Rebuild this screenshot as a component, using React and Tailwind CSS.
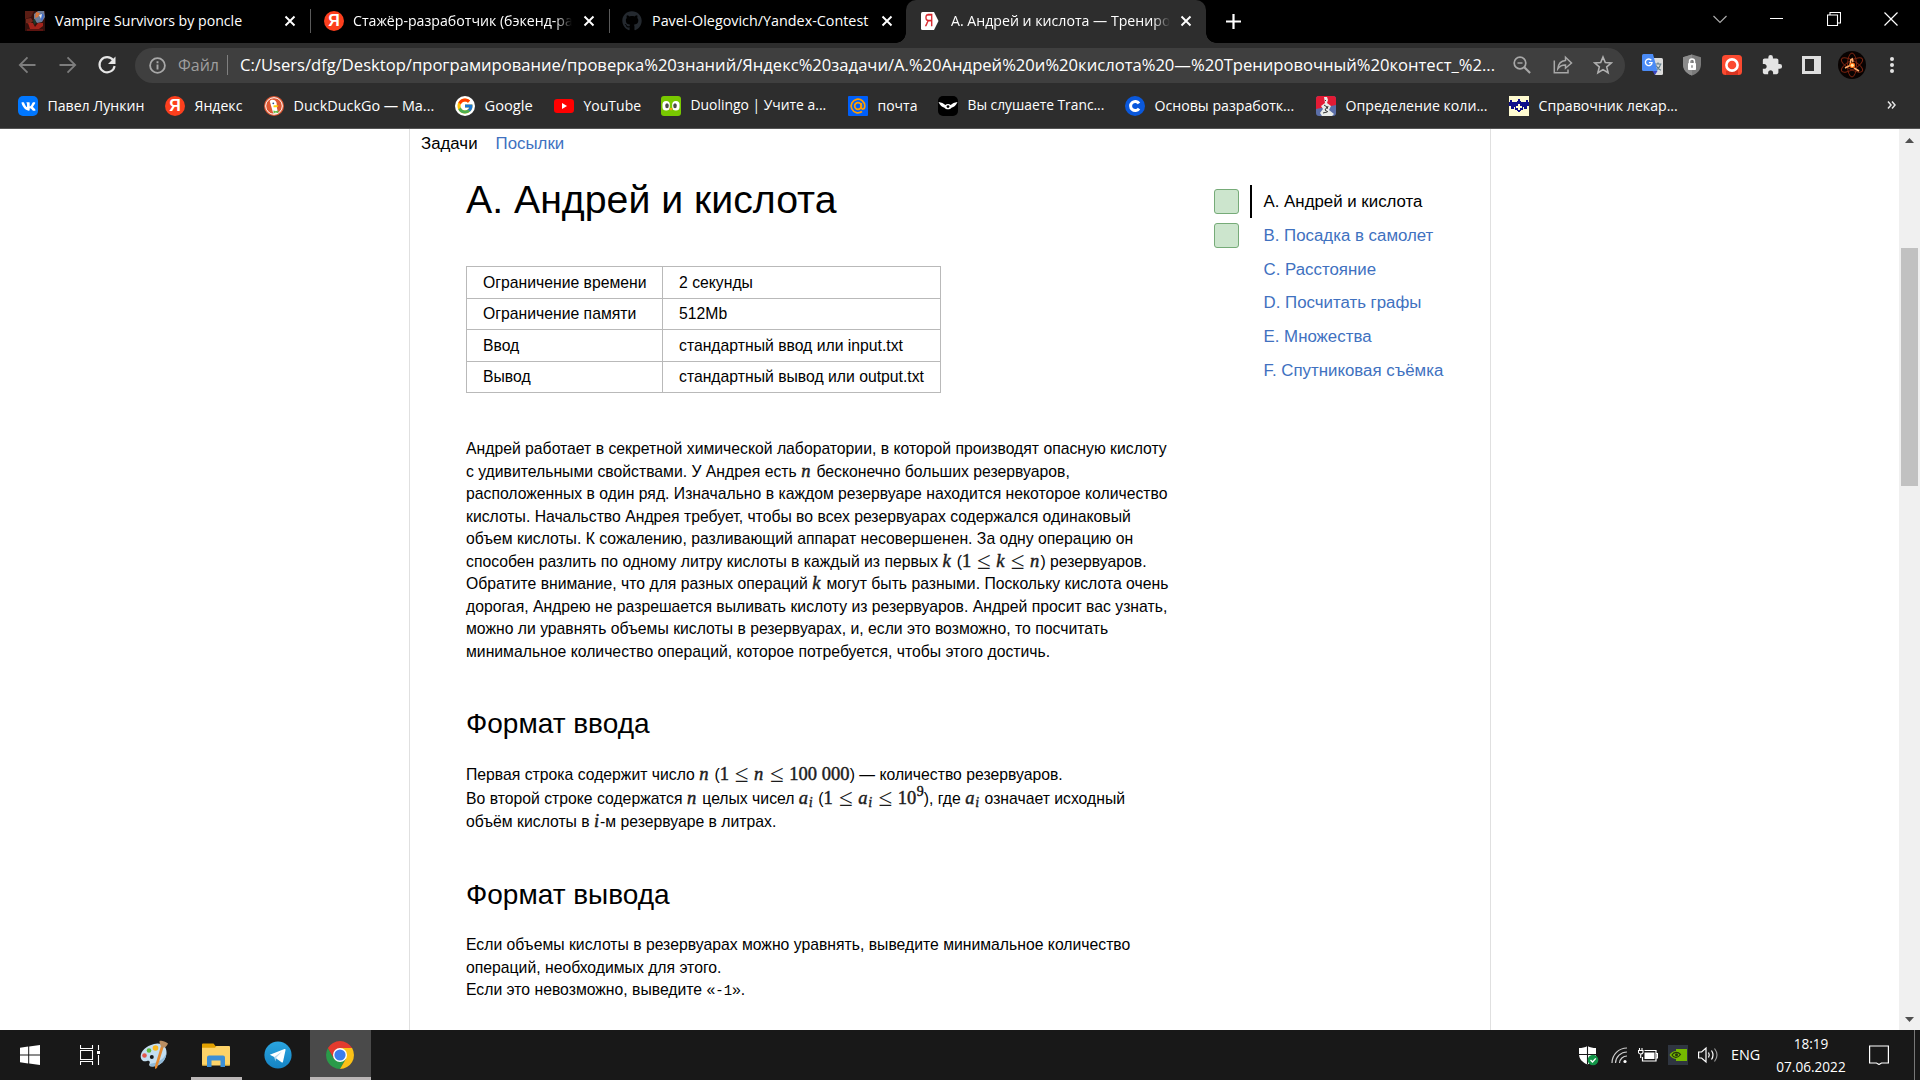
import React from "react";
import { FaGithub, FaVk } from "react-icons/fa";
import { FcGoogle } from "react-icons/fc";
import { MdExtension } from "react-icons/md";

/* ---------- favicons ---------- */

const VampireIcon = () => (
  <svg width="20" height="20" viewBox="0 0 20 20">
    <rect width="20" height="20" fill="#35100c" />
    <path d="M0 0h9l-3 6-6 2z" fill="#5a1d14" />
    <path d="M9 3l4-3h6l1 6-3 5-5 1-3-4z" fill="#6d7d99" />
    <path d="M11 1l4 1-2 4-3 1z" fill="#d9763a" />
    <path d="M16 2l3 2-2 6-2-3z" fill="#3b6ad0" />
    <path d="M14 4l3-1-1 5z" fill="#e8e4dc" />
    <path d="M1 8l5-1 2 3-3 3-4-1z" fill="#77281c" />
    <path d="M3 12h5l2 4 3-4h5v3l-4 3H5z" fill="#a3231a" />
    <path d="M2 18h16v2H2z" fill="#5e1410" />
    <path d="M8 9l2-1 1 4-2 2z" fill="#1d3a2a" />
  </svg>
);

const YandexIcon = () => (
  <span className="flex h-5 w-5 items-center justify-center rounded-full bg-[#fc3f1d] font-['Liberation_Sans',sans-serif] text-[16px] leading-none font-bold text-white">
    Я
  </span>
);

const ContestIcon = () => (
  <span className="relative flex h-5 w-5 items-center">
    <svg className="absolute inset-0" width="20" height="20" viewBox="0 0 20 20">
      <path d="M2.500 1H14l4.500 9L14 19H2.500Q1 19 1 17.500v-15Q1 1 2.500 1z" fill="#fff" />
    </svg>
    <span className="relative ml-[3px] inline-block scale-x-75 font-['Liberation_Sans',sans-serif] text-[16px] leading-none text-[#d8262c] [-webkit-text-stroke:0.3px_#d8262c]">
      Я
    </span>
  </span>
);

const VkIcon = () => (
  <span className="flex h-5 w-5 items-center justify-center rounded-[5px] bg-[#0077ff]">
    <FaVk size={15} color="#fff" />
  </span>
);

const DuckIcon = () => (
  <svg width="20" height="20" viewBox="0 0 20 20">
    <circle cx="10" cy="10" r="10" fill="#de5833" />
    <circle cx="10" cy="10" r="8.300" fill="none" stroke="#fff" strokeWidth="1" />
    <path d="M5.800 5.200c1.200-2.200 5.500-2 6.600 1 .6 2 .2 4 .6 6l1.200 5a8 8 0 0 1-4.800.5C8.300 14 6.800 9 5.800 5.200z" fill="#fff" />
    <circle cx="9.300" cy="7.300" r=".9" fill="#2d4f8e" />
    <path d="M9.500 9.600c2-.7 4.500-.5 5 .1-.6 1.200-3 1.800-5 1.500z" fill="#fdd20a" />
    <path d="M9.500 14.500l2.300.8 2.500-1v3l-2.500-.8-2.300.8z" fill="#65bc46" />
  </svg>
);

const GoogleIcon = () => (
  <span className="flex h-5 w-5 items-center justify-center rounded-full bg-white">
    <FcGoogle size={18} />
  </span>
);

const YouTubeIcon = () => (
  <svg width="20" height="20" viewBox="0 0 20 20">
    <rect y="3" width="20" height="14" rx="3.200" fill="#f00" />
    <path d="M8 7l5 3-5 3z" fill="#fff" />
  </svg>
);

const DuolingoIcon = () => (
  <svg width="20" height="20" viewBox="0 0 20 20">
    <rect width="20" height="20" rx="3" fill="#78c800" />
    <rect x="1.500" y="5" width="7.300" height="9.500" rx="3.500" fill="#fff" />
    <rect x="11.200" y="5" width="7.300" height="9.500" rx="3.500" fill="#fff" />
    <ellipse cx="6" cy="9.800" rx="1.800" ry="2.500" fill="#4b4b4b" />
    <ellipse cx="14" cy="9.800" rx="1.800" ry="2.500" fill="#4b4b4b" />
    <path d="M8 12h4l-2 2.800z" fill="#f7a418" />
  </svg>
);

const MailIcon = () => (
  <svg width="20" height="20" viewBox="0 0 20 20">
    <rect width="20" height="20" rx="1" fill="#005ff9" />
    <circle cx="10" cy="10" r="3.300" fill="none" stroke="#ff9e00" strokeWidth="1.800" />
    <path d="M13.300 7v4.200c0 2.800 3.500 2.500 3.500-1.200A6.800 6.800 0 1 0 14 15.500" fill="none" stroke="#ff9e00" strokeWidth="1.700" />
  </svg>
);

const TranceIcon = () => (
  <svg width="20" height="20" viewBox="0 0 20 20">
    <rect width="20" height="20" rx="5" fill="#000" />
    <path d="M.5 6c3 .5 5.200 1.400 6.800 3 1.500-1.300 3.900-1.300 5.400 0 1.600-1.600 3.800-2.500 6.800-3-1.500 3.500-3.500 5-6 5.700-1.600 2.200-5.400 2.200-7 0C4 11 2 9.500.5 6z" fill="#fff" />
    <circle cx="10" cy="10.600" r="1.400" fill="#000" />
  </svg>
);

const CodeIcon = () => (
  <svg width="20" height="20" viewBox="0 0 20 20">
    <circle cx="10" cy="10" r="10" fill="#0a58dc" />
    <path d="M14 7.400a4.600 4.600 0 1 0 0 5.200" fill="none" stroke="#fff" strokeWidth="3" />
  </svg>
);

const StatueIcon = () => (
  <svg width="20" height="20" viewBox="0 0 20 20">
    <rect width="20" height="20" rx="3" fill="#5b6ea8" />
    <path d="M3 0h14a3 3 0 0 1 3 3v6L0 13V3a3 3 0 0 1 3-3z" fill="#e31b35" />
    <path d="M8 1h3l1 3-1 3 4 3-2 4 5 4-2 2H6l-2-3 3-4-2-3 4-3z" fill="#e9ebe8" />
    <path d="M9 4l1 1M8 9l3 2-2 3 3 2M12 10l-1 3M7 17l4-1" stroke="#333" strokeWidth="1" fill="none" />
  </svg>
);

const HandbookIcon = () => (
  <svg width="20" height="20" viewBox="0 0 20 20">
    <rect width="20" height="20" fill="#fffbd0" />
    <path d="M0 6h1V4h2v2h5V5h1V3h2v2h1v1h5V4h2v2h1v4h-2v3h-3v-2h-1v3h-2v1h-1v1H9v-1H8v-1H6v-3H5v2H2v-3H0z" fill="#10108a" />
    <path d="M9 8h2v2h2v2h-2v2H9v-2H7v-2h2z" fill="#fffbd0" />
  </svg>
);

/* ---------- browser chrome ---------- */

const CloseX = () => (
  <svg width="12" height="12" viewBox="0 0 12 12" className="shrink-0">
    <path d="M1.500 1.500l9 9M10.500 1.500l-9 9" stroke="#fff" strokeWidth="1.900" />
  </svg>
);

const TabStrip = () => (
  <div className="flex h-[43px] bg-black text-[14.15px] text-white">
    <div className="flex w-[310px] items-center pr-[14px] pb-px pl-[25px]">
      <VampireIcon />
      <span className="ml-[10px] flex-1 pb-px whitespace-nowrap">Vampire Survivors by poncle</span>
      <CloseX />
    </div>
    <div className="flex w-[299px] items-center pr-[14px] pb-px">
      <span className="h-6 w-px bg-[#5a5a5a]" />
      <span className="ml-[13px]"><YandexIcon /></span>
      <span className="mr-auto ml-[9px] w-[219px] pb-px whitespace-nowrap [mask-image:linear-gradient(to_right,black_92%,transparent_100%)]">
        Стажёр-разработчик (бэкенд-ра
      </span>
      <CloseX />
    </div>
    <div className="flex w-[297px] items-center pr-[13px] pb-px">
      <span className="h-6 w-px bg-[#5a5a5a]" />
      <span className="ml-[12px]"><FaGithub size={20} color="#24292f" /></span>
      <span className="ml-[10px] flex-1 pb-px text-[14.35px] whitespace-nowrap">Pavel-Olegovich/Yandex-Contest</span>
      <CloseX />
    </div>
    <div className="relative flex w-[300px] items-center rounded-t-[10px] bg-[#2d2d2d] pr-[14px] pb-px pl-[14px]">
      <span className="absolute bottom-0 -left-[10px] h-[10px] w-[10px] bg-[radial-gradient(circle_at_0_0,transparent_9.5px,#2d2d2d_10px)]" />
      <span className="absolute -right-[10px] bottom-0 h-[10px] w-[10px] bg-[radial-gradient(circle_at_100%_0,transparent_9.5px,#2d2d2d_10px)]" />
      <ContestIcon />
      <span className="mr-auto ml-[11px] w-[219px] pb-px whitespace-nowrap [mask-image:linear-gradient(to_right,black_92%,transparent_100%)]">
        А. Андрей и кислота — Трениро
      </span>
      <CloseX />
    </div>
    <div className="flex flex-1 items-center pb-px pl-[20px]">
      <svg width="15" height="15" viewBox="0 0 15 15">
        <path d="M7.500 0v15M0 7.500h15" stroke="#fff" strokeWidth="2.200" />
      </svg>
    </div>
    <div className="flex h-[37px] items-center text-white">
      <svg width="14" height="14" viewBox="0 0 14 14" className="mr-[43px]">
        <path d="M.5 4l6.500 6.500L13.500 4" fill="none" stroke="#aaa" strokeWidth="1.200" />
      </svg>
      <svg width="14" height="14" viewBox="0 0 14 14" className="mr-[43px]">
        <path d="M0 6.500h13" stroke="#fff" strokeWidth="1" shapeRendering="crispEdges" />
      </svg>
      <svg width="14" height="14" viewBox="0 0 14 14" className="mr-[43px]">
        <path d="M.5 3h10v10.500H.5zM3 3V.5h10.500V11H11" fill="none" stroke="#fff" strokeWidth="1.100" />
      </svg>
      <svg width="14" height="14" viewBox="0 0 14 14" className="mr-[22px]">
        <path d="M.5.5l13 13M13.500.5l-13 13" stroke="#fff" strokeWidth="1.200" />
      </svg>
    </div>
  </div>
);

const Toolbar = () => (
  <div className="flex h-[44px] items-center bg-[#2d2d2d]">
    <svg width="18" height="18" viewBox="0 0 18 18" className="ml-[18px]">
      <path d="M17.500 9H2M9.500 1.300L1.800 9l7.700 7.700" fill="none" stroke="#7d7d7d" strokeWidth="1.800" />
    </svg>
    <svg width="18" height="18" viewBox="0 0 18 18" className="ml-[23px]">
      <path d="M.5 9H16M8.500 1.300L16.200 9l-7.700 7.700" fill="none" stroke="#7d7d7d" strokeWidth="1.800" />
    </svg>
    <svg width="20" height="20" viewBox="0 0 20 20" className="ml-[20px]">
      <path d="M16.200 5.200A7.600 7.600 0 1 0 17.600 11" fill="none" stroke="#e6e6e6" strokeWidth="2.100" />
      <path d="M18.500 1.500V9H11z" fill="#e6e6e6" />
    </svg>
    <div className="ml-[18px] flex h-[35px] w-[1490px] items-center rounded-full bg-[#3f3f3f]">
      <svg width="17" height="17" viewBox="0 0 17 17" className="ml-[14px] shrink-0">
        <circle cx="8.500" cy="8.500" r="7.400" fill="none" stroke="#a8a8a8" strokeWidth="1.800" />
        <path d="M8.500 7.500v5M8.500 4.300v1.900" stroke="#a8a8a8" strokeWidth="1.900" />
      </svg>
      <span className="ml-[12px] w-[49px] text-[16px] text-[#9e9e9e]">Файл</span>
      <span className="h-5 w-px bg-[#808080]" />
      <span className="ml-[12px] w-[1273px] text-[16.6px] whitespace-nowrap text-white">
        C:/Users/dfg/Desktop/програмирование/проверка%20знаний/Яндекс%20задачи/А.%20Андрей%20и%20кислота%20—%20Тренировочный%20контест_%2...
      </span>
      <svg width="18" height="18" viewBox="0 0 18 18" className="shrink-0">
        <circle cx="7" cy="7" r="5.800" fill="none" stroke="#a8a8a8" strokeWidth="1.700" />
        <path d="M11.300 11.300l5.800 5.800" stroke="#a8a8a8" strokeWidth="2.100" />
        <path d="M4.500 7h5" stroke="#a8a8a8" strokeWidth="1.400" />
      </svg>
      <svg width="20" height="20" viewBox="0 0 20 20" className="ml-[22px] shrink-0">
        <path d="M1.300 5.500v12.200H15V14.500" fill="none" stroke="#a8a8a8" strokeWidth="1.500" />
        <path d="M12.500 2.300L18.500 8l-6 5.200V10c-3.500-.1-5.800 1.100-7.700 3.800C5.200 9.300 7.800 5.800 12.500 5.400z" fill="none" stroke="#a8a8a8" strokeWidth="1.500" />
      </svg>
      <svg width="20" height="20" viewBox="0 0 20 20" className="ml-[20px] shrink-0">
        <path d="M10 2l2.300 5.500 5.900.5-4.500 3.900 1.400 5.800L10 14.600l-5.100 3.100 1.400-5.800L1.800 8l5.900-.5z" fill="none" stroke="#b0b0b0" strokeWidth="1.600" />
      </svg>
    </div>
    <svg width="22" height="22" viewBox="0 0 22 22" className="ml-[17px]">
      <path d="M9 4h10.500Q21 4 21 5.500v14Q21 21 19.500 21H13z" fill="#dcdcdc" />
      <path d="M12.500 10h7M16 8.500V10M18.500 10c-.5 3-2.500 5-5 6.200M14 11.500c1 2 2.500 3.800 5 4.700" fill="none" stroke="#607d8b" strokeWidth="1.200" />
      <path d="M1.500 0H11l4.500 17H1.500Q0 17 0 15.500v-14Q0 0 1.500 0z" fill="#4b8bf5" />
      <path d="M10.500 17h5L13 21z" fill="#3a46c4" />
      <path d="M9.300 6.300A3.300 3.300 0 1 0 10 8.600H6.900" fill="none" stroke="#fff" strokeWidth="1.400" />
    </svg>
    <svg width="20" height="22" viewBox="0 0 20 22" className="ml-[18px]">
      <path d="M10 .5l9 2.700v7c0 5.300-3.500 9.300-9 11.300-5.500-2-9-6-9-11.300v-7z" fill="#7b7b7b" />
      <path d="M10 .5v21c-5.500-2-9-6-9-11.300v-7z" fill="#8c8c8c" />
      <rect x="6" y="9" width="8" height="7" rx=".8" fill="#fff" />
      <path d="M7.500 9V7.500a2.500 2.500 0 0 1 5 0V9" fill="none" stroke="#fff" strokeWidth="1.500" />
      <path d="M10 11.300v2.500" stroke="#777" strokeWidth="1.300" />
    </svg>
    <svg width="20" height="20" viewBox="0 0 20 20" className="ml-[20px]">
      <rect width="20" height="20" rx="3.500" fill="#fb4a30" />
      <path d="M4 20v-4l12-1v5z" fill="#d93420" />
      <circle cx="10" cy="10" r="5.600" fill="none" stroke="#fff" strokeWidth="2.600" />
    </svg>
    <MdExtension size={22} color="#e3e3e3" className="ml-[19px]" />
    <svg width="19" height="18" viewBox="0 0 19 18" className="ml-[19px]">
      <path d="M0 0h19v18H0zM3 3v12h9V3z" fill="#dedede" fillRule="evenodd" />
    </svg>
    <svg width="28" height="28" viewBox="0 0 28 28" className="ml-[17px]">
      <circle cx="14" cy="14" r="14" fill="#080302" />
      <g fill="none" stroke="#7a2410" strokeWidth="1">
        <ellipse cx="14" cy="14" rx="4.500" ry="12" />
        <ellipse cx="14" cy="14" rx="4.500" ry="12" transform="rotate(60 14 14)" />
        <ellipse cx="14" cy="14" rx="4.500" ry="12" transform="rotate(120 14 14)" />
      </g>
      <path d="M7 17l5-2.500L13 8M16 17l5 3M14 7l1 4" fill="none" stroke="#ffb070" strokeWidth="1.500" />
      <circle cx="14.300" cy="14.300" r="2.800" fill="#ff6a10" />
      <circle cx="14.300" cy="14.300" r="1.600" fill="#ffe9a0" />
    </svg>
    <svg width="4" height="18" viewBox="0 0 4 18" className="ml-[24px]">
      <circle cx="2" cy="3" r="2" fill="#e3e3e3" />
      <circle cx="2" cy="9" r="2" fill="#e3e3e3" />
      <circle cx="2" cy="15" r="2" fill="#e3e3e3" />
    </svg>
  </div>
);

const bookmarks = [
  { Icon: VkIcon, label: "Павел Лункин", box: "w-[147px]", text: "text-[14.1px]" },
  { Icon: YandexIcon, label: "Яндекс", box: "w-[99px]", text: "text-[14.1px]" },
  { Icon: DuckIcon, label: "DuckDuckGo — Ma...", box: "w-[191px]", text: "text-[14.4px]" },
  { Icon: GoogleIcon, label: "Google", box: "w-[99px]", text: "text-[14.7px]" },
  { Icon: YouTubeIcon, label: "YouTube", box: "w-[107px]", text: "text-[14px]" },
  { Icon: DuolingoIcon, label: "Duolingo | Учите а...", box: "w-[187px]", text: "text-[13.9px]" },
  { Icon: MailIcon, label: "почта", box: "w-[90px]", text: "text-[14px]" },
  { Icon: TranceIcon, label: "Вы слушаете Tranc...", box: "w-[187px]", text: "text-[13.8px]" },
  { Icon: CodeIcon, label: "Основы разработк...", box: "w-[191px]", text: "text-[14.15px]" },
  { Icon: StatueIcon, label: "Определение коли...", box: "w-[193px]", text: "text-[14.15px]" },
  { Icon: HandbookIcon, label: "Справочник лекар...", box: "w-[180px]", text: "text-[14.15px]" },
];

const BookmarksBar = () => (
  <div className="flex h-[42px] items-start border-b border-[#555] bg-[#2d2d2d] pt-[9px] pr-[24px] pl-[18px] text-white">
    {bookmarks.map(({ Icon, label, box, text }) => (
      <div key={label} className={`flex h-5 shrink-0 items-center ${box}`}>
        <Icon />
        <span className={`ml-[9.5px] pb-px whitespace-nowrap ${text}`}>{label}</span>
      </div>
    ))}
    <svg width="9" height="8" viewBox="0 0 9 8" className="mt-[5px] ml-auto">
      <path d="M1 .5L4 4 1 7.500M5 .5L8 4 5 7.500" fill="none" stroke="#e6e6e6" strokeWidth="1.500" />
    </svg>
  </div>
);

/* ---------- page ---------- */

const M = ({ w = "", it, children }) => (
  <span
    className={`inline-block font-['Liberation_Serif',serif] text-[18.5px] leading-[16px] text-[#1c1c1c] [-webkit-text-stroke:0.45px_#1c1c1c] ${it ? "italic" : ""} ${w}`}
  >
    {children}
  </span>
);

const Le = () => (
  <span className="relative top-[2px] inline-block w-[24.7px] text-center font-['Liberation_Serif',serif] text-[25px] leading-[10px] text-[#1c1c1c]">
    ≤
  </span>
);

const Ai = () => (
  <span className="inline-block w-[15px] whitespace-nowrap">
    <M it w="w-[10px]">a</M>
    <span className="relative top-[3px] inline-block font-['Liberation_Serif',serif] text-[14px] leading-[8px] text-[#1c1c1c] italic [-webkit-text-stroke:0.4px_#1c1c1c]">
      i
    </span>
  </span>
);

const Line = ({ children, h = "h-[22.5px]" }) => (
  <div className={`leading-[22.5px] whitespace-nowrap ${h}`}>{children}</div>
);

const limits = [
  ["Ограничение времени", "2 секунды", "h-[32px]"],
  ["Ограничение памяти", "512Mb", "h-[31px]"],
  ["Ввод", "стандартный ввод или input.txt", "h-[32px]"],
  ["Вывод", "стандартный вывод или output.txt", "h-[31px]"],
];

const Problem = () => (
  <div className="w-[748px] text-[15.75px] text-black">
    <h1 className="mt-[24px] h-[48px] text-[39.25px] leading-[48px] whitespace-nowrap">А. Андрей и кислота</h1>
    <div className="mt-[43px] w-[475px] border-t border-l border-[#b9b9b9]">
      {limits.map(([name, value, h]) => (
        <div key={name} className={`flex border-b border-[#b9b9b9] whitespace-nowrap ${h}`}>
          <div className="flex w-[196px] items-center border-r border-[#b9b9b9] pl-[16px]">{name}</div>
          <div className="flex flex-1 items-center border-r border-[#b9b9b9] pl-[16px]">{value}</div>
        </div>
      ))}
    </div>
    <div className="mt-[45px]">
      <Line>Андрей работает в секретной химической лаборатории, в которой производят опасную кислоту</Line>
      <Line>с удивительными свойствами. У Андрея есть <M it w="w-[11px]">n</M> бесконечно больших резервуаров,</Line>
      <Line>расположенных в один ряд. Изначально в каждом резервуаре находится некоторое количество</Line>
      <Line>кислоты. Начальство Андрея требует, чтобы во всех резервуарах содержался одинаковый</Line>
      <Line>объем кислоты. К сожалению, разливающий аппарат несовершенен. За одну операцию он</Line>
      <Line>
        способен разлить по одному литру кислоты в каждый из первых <M it w="w-[10px]">k</M> (<M w="w-[9.500px]">1</M><Le /><M it w="w-[9px]">k</M><Le /><M it w="w-[10.500px]">n</M>) резервуаров.
      </Line>
      <Line>Обратите внимание, что для разных операций <M it w="w-[10px]">k</M> могут быть разными. Поскольку кислота очень</Line>
      <Line>дорогая, Андрею не разрешается выливать кислоту из резервуаров. Андрей просит вас узнать,</Line>
      <Line>можно ли уравнять объемы кислоты в резервуарах, и, если это возможно, то посчитать</Line>
      <Line>минимальное количество операций, которое потребуется, чтобы этого достичь.</Line>
    </div>
    <h2 className="mt-[43px] h-[36px] text-[28px] leading-[36px]">Формат ввода</h2>
    <div className="mt-[22px]">
      <Line h="h-[24px]">
        Первая строка содержит число <M it w="w-[11px]">n</M> (<M w="w-[9.500px]">1</M><Le /><M it w="w-[10.500px]">n</M><Le /><M w="w-[28.500px]">100</M><M w="w-[4px]"> </M><M w="w-[28px]">000</M>) — количество резервуаров.
      </Line>
      <Line>
        Во второй строке содержатся <M it w="w-[11px]">n</M> целых чисел <Ai /> (<M w="w-[10px]">1</M><Le /><Ai /><Le /><M w="w-[19px]">10</M>
        <span className="relative -top-[8px] inline-block w-[7px] font-['Liberation_Serif',serif] text-[14px] leading-[6px] [-webkit-text-stroke:0.4px_#1c1c1c]">9</span>), где <Ai /> означает исходный
      </Line>
      <Line>объём кислоты в <M it w="w-[6px]">i</M>-м резервуаре в литрах.</Line>
    </div>
    <h2 className="mt-[44px] h-[36px] text-[28px] leading-[36px]">Формат вывода</h2>
    <div className="mt-[21px]">
      <Line>Если объемы кислоты в резервуарах можно уравнять, выведите минимальное количество</Line>
      <Line>операций, необходимых для этого.</Line>
      <Line>Если это невозможно, выведите «<span className="font-['Liberation_Mono',monospace] text-[14px] leading-none">-1</span>».</Line>
    </div>
  </div>
);

const tasks = [
  { label: "A. Андрей и кислота", done: true, active: true },
  { label: "B. Посадка в самолет", done: true },
  { label: "C. Расстояние" },
  { label: "D. Посчитать графы" },
  { label: "E. Множества" },
  { label: "F. Спутниковая съёмка" },
];

const TaskList = () => (
  <div className="mt-[34px] text-[16.85px]">
    {tasks.map(({ label, done, active }) => (
      <div key={label} className="flex h-[33.75px] items-center whitespace-nowrap">
        <span className={`h-[25px] w-[25px] rounded-[3px] border ${done ? "border-[#76ab78] bg-[#cce5cd]" : "border-transparent"}`} />
        <span className={`ml-[11px] h-[33px] w-[2px] ${active ? "bg-black" : ""}`} />
        <span className={`ml-[11.5px] ${active ? "text-black" : "text-[#4071bf]"}`}>{label}</span>
      </div>
    ))}
  </div>
);

const Page = () => (
  <div className="flex h-[901px] overflow-hidden bg-white font-['Liberation_Sans',Arial,sans-serif]">
    <div className="ml-[409px] w-[1082px] border-r border-l border-[#e0e0e0]">
      <div className="flex h-[22px] items-start gap-[18px] pt-[4px] pl-[11px] text-[16.85px] leading-[22px]">
        <span className="text-black">Задачи</span>
        <span className="text-[#4071bf]">Посылки</span>
      </div>
      <div className="flex pl-[56px]">
        <Problem />
        <TaskList />
      </div>
    </div>
    <div className="ml-auto flex w-[21px] flex-col items-center bg-[#f0f0f0]">
      <svg width="9" height="5" viewBox="0 0 9 5" className="mt-[9px]">
        <path d="M0 5L4.500 0 9 5z" fill="#505050" />
      </svg>
      <div className="mt-[105px] h-[238px] w-[17px] bg-[#c1c1c1]" />
      <svg width="9" height="5" viewBox="0 0 9 5" className="mt-auto mb-[8px]">
        <path d="M0 0h9L4.500 5z" fill="#505050" />
      </svg>
    </div>
  </div>
);

/* ---------- taskbar ---------- */

const WindowsIcon = () => (
  <svg width="20" height="20" viewBox="0 0 20 20">
    <path d="M0 2.800l8.200-1.200v7.900H0zM9.200 1.500L20 0v9.500H9.200zM0 10.500h8.200v7.900L0 17.200zM9.200 10.500H20V20L9.200 18.500z" fill="#fff" />
  </svg>
);

const TaskViewIcon = () => (
  <svg width="20" height="20" viewBox="0 0 20 20" fill="none" stroke="#fff" strokeWidth="1.100">
    <path d="M.5 0v3.500h12V0M.5 5.500h12v9H.5zM.5 20v-3.500h12V20M18.500 0v5M18.500 10v10" />
    <path d="M17 6h3v3h-3z" fill="#fff" stroke="none" />
  </svg>
);

const PaintIcon = () => (
  <svg width="30" height="30" viewBox="0 0 30 30">
    <path d="M15 4c7-2 13 2 12.500 9C27 20 22 26 14 26.500c-3 .2-4.500-1-3.500-3 1-2-.5-3-2.500-2.500-2 .6-4 .6-5.500-1.500C-.5 14 5 6.500 15 4z" fill="#c3def0" />
    <path d="M14 26.500C22 26 27 20 27.500 13c-2 5-7 9.500-15 10.500-2 .5-2.500 2.500 1.500 3z" fill="#8fb9d8" />
    <circle cx="5.500" cy="15.500" r="2.300" fill="#e2574c" />
    <circle cx="10" cy="10.500" r="2.300" fill="#5fb83c" />
    <circle cx="16.500" cy="8" r="2.800" fill="#f9b81f" />
    <circle cx="12.800" cy="17" r="2" fill="#181818" />
    <path d="M22 6l2.500 1.500L18 28l-2 1v-3z" fill="#e58a2f" />
    <path d="M20.500 1c2-.8 5 0 8.500 2.500-1 3-3.500 4.500-6 4.200-1.500-2-2.500-4-2.500-6.700z" fill="#b98e62" />
  </svg>
);

const FolderIcon = () => (
  <svg width="28" height="24" viewBox="0 0 28 24">
    <path d="M0 1.500Q0 .5 1 .5h10.500L13.500 3H27v4H0z" fill="#e2a100" />
    <path d="M0 4.800h13L14.500 3H27q1 0 1 1v17.500q0 1-1 1H1q-1 0-1-1z" fill="#fdd368" />
    <path d="M5 24V14.500q0-2 2-2h14q2 0 2 2V24h-4.500v-6.500h-9V24z" fill="#3c8fd6" />
    <path d="M0 21.500h5v1H0zM23 21.500h5v1h-5z" fill="#e9b93e" />
  </svg>
);

const TelegramIcon = () => (
  <svg width="28" height="28" viewBox="0 0 28 28">
    <defs>
      <linearGradient id="tg" x1="0" y1="0" x2="0" y2="1">
        <stop offset="0" stopColor="#2aa5e0" />
        <stop offset="1" stopColor="#1583c4" />
      </linearGradient>
    </defs>
    <circle cx="14" cy="14" r="13.600" fill="url(#tg)" />
    <path d="M5.800 13.700L20.500 8c.7-.2 1.200.2 1 1.200l-2.500 11.500c-.2.900-.8 1-1.500.6l-7.300-5.400z" fill="#fff" />
    <path d="M10.200 15.900l7.800-5.400-6 6.500-.6 3.500z" fill="#b9d9ee" />
  </svg>
);

const ChromeIcon = () => (
  <svg width="28" height="28" viewBox="0 0 28 28">
    <path d="M1.900 7A14 14 0 0 0 14 28l6.100-10.500L14 14 7.900 17.500z" fill="#2a9a49" />
    <path d="M14 28a14 14 0 0 0 12.100-21H14v7l6.100 3.500z" fill="#fbc116" />
    <path d="M1.900 7L7.900 17.500 14 14V7h12.100A14 14 0 0 0 1.900 7z" fill="#e33b2e" />
    <circle cx="14" cy="14" r="7" fill="#fff" />
    <circle cx="14" cy="14" r="5.600" fill="#3b7ded" />
  </svg>
);

const Taskbar = () => (
  <div className="flex h-[50px] items-center bg-[#181818] text-white">
    <span className="ml-[20px]"><WindowsIcon /></span>
    <span className="ml-[40px]"><TaskViewIcon /></span>
    <span className="ml-[39px]"><PaintIcon /></span>
    <div className="relative ml-[22px] flex h-[50px] w-[51px] items-center pb-px pl-[11px]">
      <FolderIcon />
      <span className="absolute bottom-0 left-0 h-[3px] w-full bg-[#bab6b6]" />
    </div>
    <span className="ml-[22px]"><TelegramIcon /></span>
    <div className="relative ml-[18px] flex h-[50px] w-[61px] items-center pl-[16px]">
      <span className="absolute inset-0 bg-[#4a4a4a]" />
      <span className="relative"><ChromeIcon /></span>
      <span className="absolute bottom-0 left-0 h-[3px] w-full bg-[#bab6b6]" />
    </div>
    <div className="ml-auto flex h-[50px] items-center">
      <svg width="21" height="21" viewBox="0 0 21 21">
        <path d="M9.500 1c2.500 1.500 5.500 2 8.500 2v6c0 5-3.500 8.500-8.500 10.500C4.500 17.500 1 14 1 9V3c3 0 6-.5 8.500-2z" fill="#fff" />
        <path d="M9.500 1v18.500M1 9.500h17" stroke="#181818" strokeWidth="1.100" />
        <circle cx="15" cy="15" r="5.300" fill="#129447" />
        <path d="M12.500 15l2 2 3.300-3.600" fill="none" stroke="#fff" strokeWidth="1.400" />
      </svg>
      <svg width="17" height="17" viewBox="0 0 17 17" className="ml-[12px]" fill="none" stroke="#cfcfcf" strokeWidth="1.200">
        <path d="M1 16A15 15 0 0 1 16 1M4.500 16A11.500 11.500 0 0 1 16 5M8.500 16A7.500 7.500 0 0 1 16 9" />
        <circle cx="14" cy="14.500" r="1.600" fill="#fff" stroke="none" />
      </svg>
      <svg width="20" height="15" viewBox="0 0 20 15" className="ml-[10px]">
        <path d="M6.500 2.500h11.500V13H4.500V9M18 5.500h1.500v4.500H18" fill="none" stroke="#fff" strokeWidth="1.200" />
        <path d="M6.500 4.500h10v6.500h-10z" fill="#fff" />
        <path d="M1.500 0v2M4 0v2M.5 2.500h4.500v2q-.5 1.500-2.200 1.500Q.8 6 .5 4.500zM2.700 6v4" fill="none" stroke="#fff" strokeWidth="1.100" />
      </svg>
      <svg width="20" height="20" viewBox="0 0 20 20" className="ml-[10px]">
        <rect width="20" height="20" fill="#2f3540" />
        <path d="M8 4h11v12H8z" fill="#76b900" />
        <path d="M1.500 10C4 5.500 9 5 13 7.500l2.500 3C12 15 5 15.500 1.500 10z" fill="#76b900" />
        <path d="M4 10c2-3.500 6-3.500 8.500-.5C10 13 6 13.500 4 10z" fill="none" stroke="#26380a" strokeWidth="1.200" />
        <circle cx="8.500" cy="9.800" r="1.500" fill="#26380a" />
      </svg>
      <svg width="21" height="18" viewBox="0 0 21 18" className="ml-[10px]" fill="none" stroke="#fff" strokeWidth="1.200">
        <path d="M.6 6h3L8 2v14l-4.400-4H.6z" />
        <path d="M10.500 6.500q1.500 2.500 0 5M13.500 4.500q3 4.500 0 9" />
        <path d="M16.500 2.500q5 6.500 0 13" stroke="#999" />
      </svg>
      <span className="ml-[12px] w-[30px] text-[14.4px]">ENG</span>
      <div className="ml-[15px] flex w-[70px] flex-col items-center text-[13.6px] leading-[23px]">
        <span>18:19</span>
        <span>07.06.2022</span>
      </div>
      <svg width="20" height="20" viewBox="0 0 20 20" className="ml-[23px]">
        <path d="M.6 1h18.800v17H12.500L10 19.500 7.500 18H.6z" fill="none" stroke="#fff" strokeWidth="1.200" />
      </svg>
      <span className="mr-[5px] ml-[25px] h-[50px] w-px bg-[#777]" />
    </div>
  </div>
);

export default function App() {
  return (
    <div className="h-[1080px] w-[1920px] overflow-hidden bg-white font-['Open_Sans','Noto_Sans',sans-serif]">
      <TabStrip />
      <Toolbar />
      <BookmarksBar />
      <Page />
      <Taskbar />
    </div>
  );
}
